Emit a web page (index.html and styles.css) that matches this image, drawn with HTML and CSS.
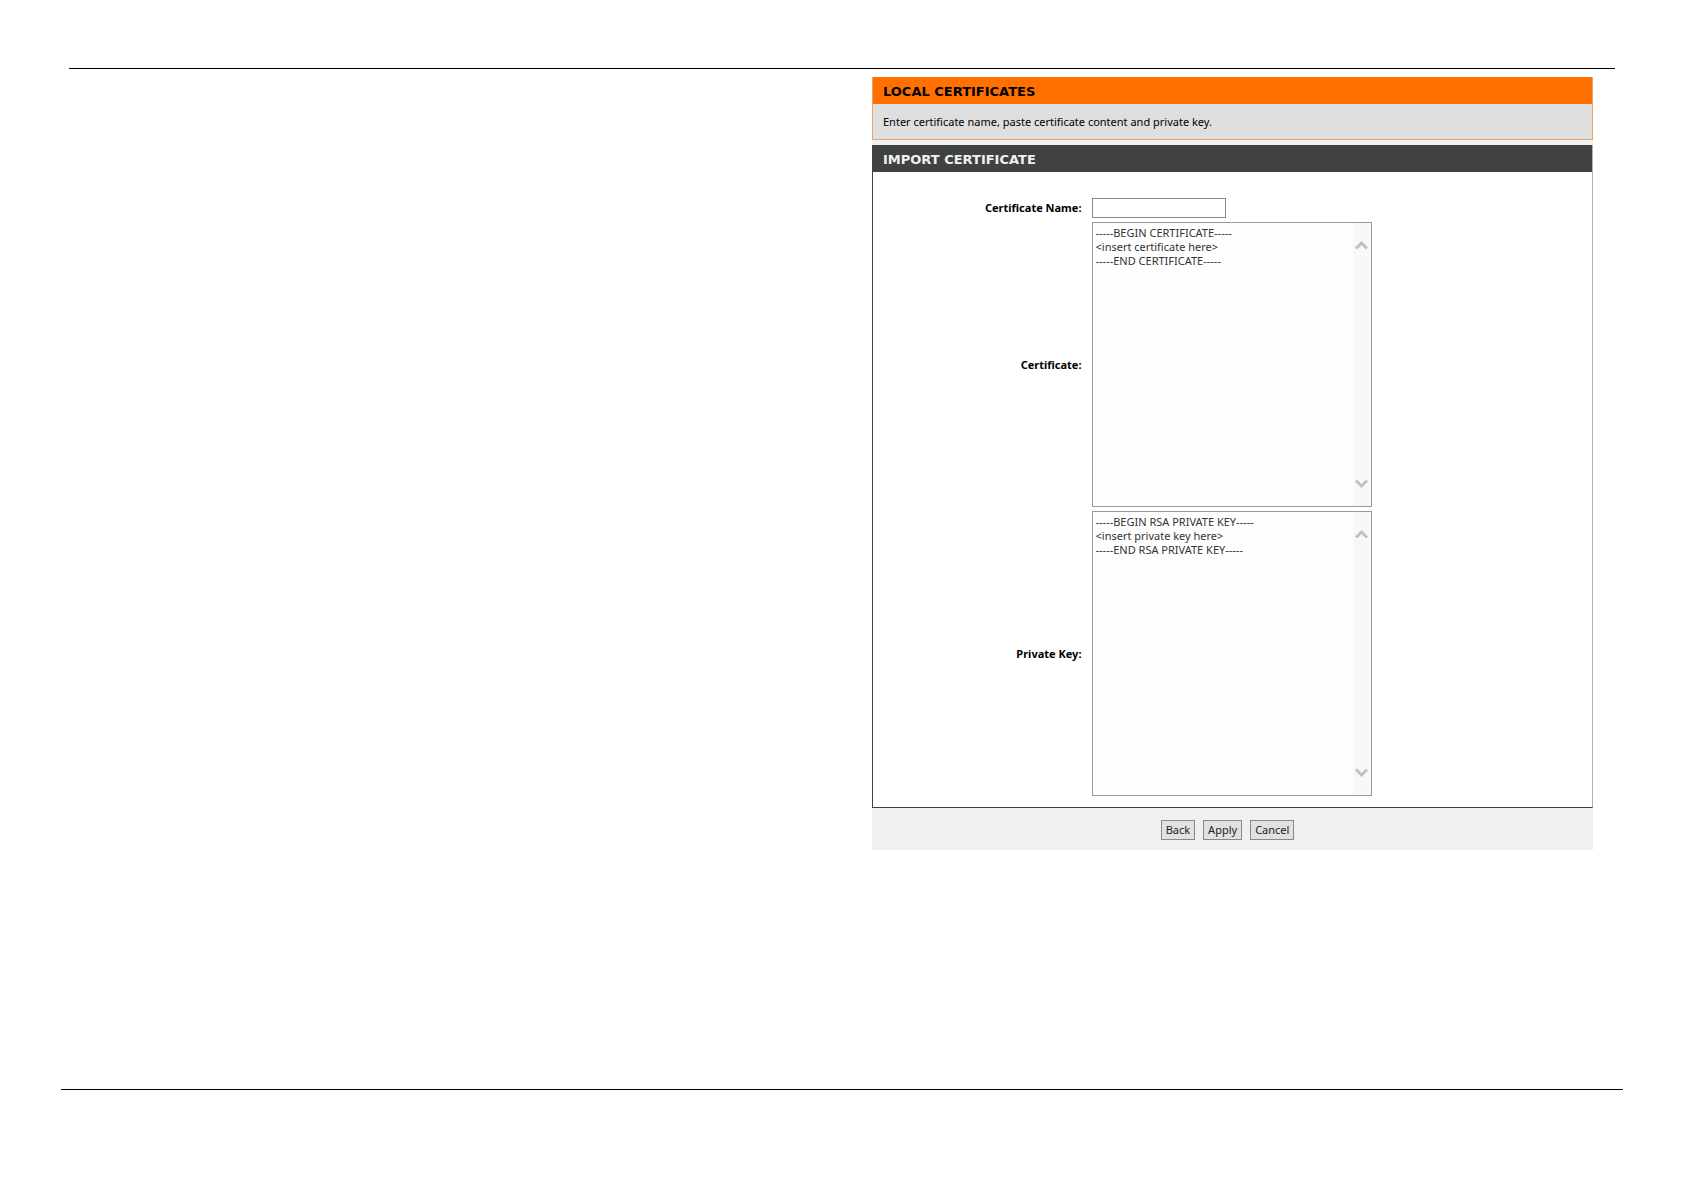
FILE: index.html
```html
<!DOCTYPE html>
<html lang="en">
<head>
  <meta charset="UTF-8">
  <meta name="viewport" content="width=device-width, initial-scale=1.0">
  <title>Local Certificates</title>
  <link rel="stylesheet" href="styles.css">
</head>

<body>
  <header class="page-header"></header>

  <main class="columns">
    <section class="panel">
      <div class="intro">
        <h1 class="intro-title">LOCAL CERTIFICATES</h1>
        <p class="intro-text">Enter certificate name, paste certificate content and private key.</p>
      </div>

      <form>
        <div class="box">
          <h2 class="box-title">IMPORT CERTIFICATE</h2>
          <div class="fields">
            <label for="cert-name">Certificate Name:</label>
            <input type="text" id="cert-name" class="name-input">

            <label for="certificate">Certificate:</label>
            <div class="area">
              <textarea id="certificate" spellcheck="false">-----BEGIN CERTIFICATE-----
&lt;insert certificate here&gt;
-----END CERTIFICATE-----</textarea>
              <div class="scroll" aria-hidden="true">
                <svg width="13" height="10" viewBox="0 0 13 10"><path d="M1 8.5 L6.5 3 L12 8.5"/></svg>
                <svg width="13" height="10" viewBox="0 0 13 10"><path d="M1 1.5 L6.5 7 L12 1.5"/></svg>
              </div>
            </div>

            <label for="private-key">Private Key:</label>
            <div class="area">
              <textarea id="private-key" spellcheck="false">-----BEGIN RSA PRIVATE KEY-----
&lt;insert private key here&gt;
-----END RSA PRIVATE KEY-----</textarea>
              <div class="scroll" aria-hidden="true">
                <svg width="13" height="10" viewBox="0 0 13 10"><path d="M1 8.5 L6.5 3 L12 8.5"/></svg>
                <svg width="13" height="10" viewBox="0 0 13 10"><path d="M1 1.5 L6.5 7 L12 1.5"/></svg>
              </div>
            </div>
          </div>
        </div>

        <div class="actions">
          <button type="button">Back</button>
          <button type="submit">Apply</button>
          <button type="reset">Cancel</button>
        </div>
      </form>
    </section>
  </main>

  <footer class="page-footer"></footer>
</body>
</html>
```

FILE: styles.css
```css
* {
  box-sizing: border-box;
}

body {
  margin: 0;
  min-height: 100vh;
  display: flex;
  flex-direction: column;
  background: #ffffff;
  color: #000000;
  font-family: "Noto Sans", "Open Sans", sans-serif;
  font-size: 11px;
  line-height: 14px;
}

.page-header {
  margin: 68px 69px 8px;
  border-top: 1px solid #000000;
}

.page-footer {
  margin: auto 61px 101px;
  border-top: 1px solid #000000;
}

.columns {
  display: grid;
  grid-template-columns: 1fr 1fr;
  gap: 60px;
  padding: 0 91px;
}

.panel {
  grid-column: 2;
  background: #f0f0f0;
}

.intro {
  margin-bottom: 5px;
  background: #dfdfdf;
  border: 1px solid #f0a060;
  border-top: none;
}

.intro-title,
.box-title {
  margin: 0;
  padding: 2px 10px 0;
  font-family: "DejaVu Sans", sans-serif;
  font-size: 13px;
  line-height: 25px;
}

.intro-title {
  background: #ff7000;
}

.intro-text {
  margin: 0;
  padding: 11px 10px 10px;
}

.box {
  background: #ffffff;
  border: 1px solid #404241;
  border-top: none;
  border-right-color: #b0b0b0;
}

.box-title {
  background: #404241;
  color: #f0f0f0;
}

.fields {
  display: grid;
  grid-template-columns: 29% 1fr;
  gap: 4px 10px;
  align-items: center;
  padding: 26px 0 11px;
}

.fields label {
  font-weight: bold;
  text-align: right;
}

.name-input {
  width: 134px;
  height: 20px;
  padding: 1px 3px;
  border: 1px solid #888888;
  font: inherit;
}

.area {
  position: relative;
  width: 280px;
  height: 285px;
}

.area textarea {
  display: block;
  width: 100%;
  height: 100%;
  padding: 3px 20px 3px 3px;
  border: 1px solid #999999;
  background: #fefefe;
  color: #333333;
  font: inherit;
  resize: none;
}

/* scroll track along the right edge of the text box */
.scroll {
  position: absolute;
  top: 1px;
  right: 1px;
  bottom: 1px;
  width: 18px;
  display: flex;
  flex-direction: column;
  align-items: center;
  justify-content: space-between;
  padding: 17px 0;
  background: #f8f8f8;
  pointer-events: none;
}

.scroll svg {
  fill: none;
  stroke: #c0c0c0;
  stroke-width: 3;
}

.actions {
  display: flex;
  justify-content: center;
  gap: 8px;
  padding: 12px 20px 10px 10px;
}

.actions button {
  height: 20px;
  padding: 0 4px;
  border: 1px solid #888888;
  background: #e1e1e1;
  color: #222222;
  font: inherit;
}
```
